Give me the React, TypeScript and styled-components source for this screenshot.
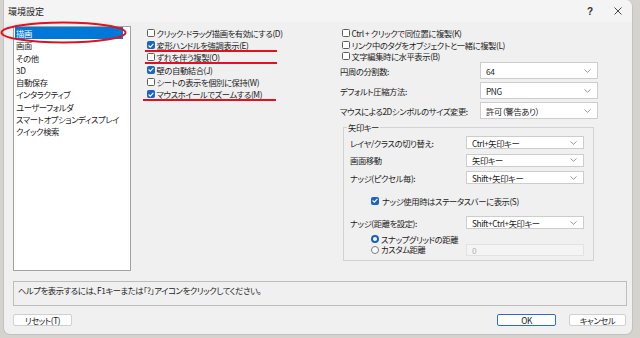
import React from 'react'
import styled, { createGlobalStyle, css } from 'styled-components'

const categories = [
	'描画',
	'画面',
	'その他',
	'3D',
	'自動保存',
	'インタラクティブ',
	'ユーザーフォルダ',
	'スマートオプションディスプレイ',
	'クイック検索',
]

const leftChecks = [
	{ label: 'クリック-ドラッグ描画を有効にする(D)', checked: false },
	{ label: '変形ハンドルを強調表示(E)', checked: true },
	{ label: 'ずれを伴う複製(O)', checked: false },
	{ label: '壁の自動結合(J)', checked: true },
	{ label: 'シートの表示を個別に保持(W)', checked: false },
	{ label: 'マウスホイールでズームする(M)', checked: true },
]

const rightChecks = [
	{ label: 'Ctrl + クリックで同位置に複製(K)', checked: false },
	{ label: 'リンク中のタグをオブジェクトと一緒に複製(L)', checked: false },
	{ label: '文字編集時に水平表示(B)', checked: false },
]

const fields = [
	{ label: '円周の分割数:', value: '64' },
	{ label: 'デフォルト圧縮方法:', value: 'PNG' },
	{ label: 'マウスによる2Dシンボルのサイズ変更:', value: '許可（警告あり）' },
]

const arrowFields = [
	{ label: 'レイヤ/クラスの切り替え:', value: 'Ctrl+矢印キー' },
	{ label: '画面移動', value: '矢印キー' },
	{ label: 'ナッジ(ピクセル毎):', value: 'Shift+矢印キー' },
]

const Chevron = () => (
	<svg width="7" height="4" viewBox="0 0 7 4">
		<path d="M0.5 0.5 L3.5 3.3 L6.5 0.5" fill="none" stroke="#8a8a8a" strokeWidth="0.9" />
	</svg>
)

const CheckMark = () => (
	<svg width="6" height="5" viewBox="0 0 6 5">
		<path d="M0.6 2.5 L2.3 4.1 L5.4 0.8" fill="none" stroke="#fff" strokeWidth="1.1" />
	</svg>
)

const Check = ({ label, checked }: { label: string; checked: boolean }) => (
	<CheckRow>
		<Box $checked={checked}>{checked && <CheckMark />}</Box>
		<span>{label}</span>
	</CheckRow>
)

const Dropdown = ({ value, $h }: { value: string; $h: number }) => (
	<Select $h={$h}>
		<span>{value}</span>
		<Chevron />
	</Select>
)

export default function App() {
	return (
		<Page>
			<GlobalStyle />
			<Window>
				<TitleBar>
					<Title>環境設定</Title>
					<TitleButton>?</TitleButton>
					<TitleButton>
						<svg width="8" height="8" viewBox="0 0 8 8">
							<path d="M0.5 0.5 L7.5 7.5 M7.5 0.5 L0.5 7.5" stroke="#333" strokeWidth="0.9" />
						</svg>
					</TitleButton>
				</TitleBar>

				<Body>
					<List>
						{categories.map((c, i) => (
							<ListItem key={c} $selected={i === 0}>
								{c}
							</ListItem>
						))}
					</List>

					<MiddleColumn>
						{leftChecks.map((c) => (
							<Check key={c.label} {...c} />
						))}
					</MiddleColumn>

					<RightColumn>
						<RightChecks>
							{rightChecks.map((c) => (
								<Check key={c.label} {...c} />
							))}
						</RightChecks>

						<FieldGrid>
							{fields.map((f) => (
								<React.Fragment key={f.label}>
									<Label>{f.label}</Label>
									<Dropdown value={f.value} $h={17} />
								</React.Fragment>
							))}
						</FieldGrid>

						<Group>
							<Legend>矢印キー</Legend>
							<GroupGrid>
								{arrowFields.map((f) => (
									<React.Fragment key={f.label}>
										<Label>{f.label}</Label>
										<Dropdown value={f.value} $h={13} />
									</React.Fragment>
								))}
							</GroupGrid>
							<NudgeCheck>
								<Check label="ナッジ使用時はステータスバーに表示(S)" checked />
							</NudgeCheck>
							<GroupGrid>
								<Label>ナッジ(距離を設定):</Label>
								<Dropdown value="Shift+Ctrl+矢印キー" $h={13} />
							</GroupGrid>
							<RadioGrid>
								<RadioRow>
									<Radio $on />
									<span>スナップグリッドの距離</span>
								</RadioRow>
								<span />
								<RadioRow>
									<Radio />
									<span>カスタム距離</span>
								</RadioRow>
								<TextField>0</TextField>
							</RadioGrid>
						</Group>
					</RightColumn>
				</Body>

				<HelpBox>ヘルプを表示するには、F1キーまたは「?」アイコンをクリックしてください。</HelpBox>

				<Footer>
					<Button $w={59}>リセット(T)</Button>
					<Spacer />
					<Button $w={59} $primary>
						OK
					</Button>
					<Button $w={57}>キャンセル</Button>
				</Footer>
			</Window>

			<Marks width="640" height="338" viewBox="0 0 640 338">
				<ellipse cx="63.5" cy="32.5" rx="62" ry="10" fill="none" stroke="#e3101e" strokeWidth="2" />
				<line x1="145" y1="51" x2="277" y2="51" stroke="#e3101e" strokeWidth="2" />
				<line x1="145" y1="63" x2="277" y2="63" stroke="#e3101e" strokeWidth="2" />
				<line x1="143" y1="100" x2="276" y2="100" stroke="#e3101e" strokeWidth="2" />
			</Marks>
		</Page>
	)
}

const GlobalStyle = createGlobalStyle`
	html, body {
		margin: 0;
		padding: 0;
	}

	body {
		background: #d6d3ce;
		font-family: "Noto Sans CJK JP", "Noto Sans", sans-serif;
		font-size: 8.3px;
		letter-spacing: -0.4px;
		font-feature-settings: "palt";
		color: #1c1c1c;
	}
`

const Page = styled.div`
	position: relative;
	width: 640px;
	height: 338px;
	overflow: hidden;
`

const Window = styled.div`
	box-sizing: border-box;
	width: 630px;
	height: 335px;
	margin-left: 3px;
	display: flex;
	flex-direction: column;

	background: #f0f0f0;
	border: 1px solid #c2c2c2;
	border-top: none;
	border-radius: 0 7px 7px 7px;
	overflow: hidden;
`

const TitleBar = styled.div`
	display: flex;
	align-items: center;
	height: 22px;
	flex: none;
	padding-left: 4px;
	background: #f4f4f4;
`

const Title = styled.div`
	flex: 1;
	font-size: 9px;
	letter-spacing: 0;
	color: #222;
`

const TitleButton = styled.div`
	width: 28px;
	display: flex;
	justify-content: center;
	font-family: "Liberation Sans", sans-serif;
	font-size: 10px;
	font-weight: bold;
	letter-spacing: 0;
	color: #333;
`

const Body = styled.div`
	display: flex;
	padding: 4px 0 0 9px;
`

const List = styled.div`
	box-sizing: border-box;
	width: 118px;
	height: 245px;
	flex: none;

	background: #fff;
	border: 1px solid #a2a2a2;
`

const ListItem = styled.div<{ $selected?: boolean }>`
	height: 12.3px;
	line-height: 12.3px;
	padding-left: 2px;
	margin-right: 7px;
	white-space: nowrap;

	${(p) =>
		p.$selected &&
		css`
			background: #0078d7;
			color: #fff;
			margin-left: 1px;
			padding-left: 1px;
		`}
`

const MiddleColumn = styled.div`
	width: 193px;
	margin-left: 16px;
	padding-top: 1px;
	flex: none;
`

const CheckRow = styled.div`
	display: flex;
	align-items: center;
	gap: 1.5px;
	height: 12.2px;
	white-space: nowrap;
`

const Box = styled.span<{ $checked?: boolean }>`
	box-sizing: border-box;
	flex: none;
	display: grid;
	place-items: center;
	width: 8px;
	height: 8px;

	border-radius: 1.5px;
	border: 1px solid ${(p) => (p.$checked ? '#1a64c8' : '#5c5c5c')};
	background: ${(p) => (p.$checked ? '#1a64c8' : '#fff')};
`

const RightColumn = styled.div`
	width: 258px;
	flex: none;
`

const RightChecks = styled.div`
	padding: 1px 0 0 2px;

	${CheckRow} {
		height: 11.7px;
	}
`

const FieldGrid = styled.div`
	display: grid;
	grid-template-columns: 140px 118px;
	grid-auto-rows: 17px;
	row-gap: 3px;
	align-items: center;
`

const Label = styled.span`
	white-space: nowrap;
`

const Select = styled.div<{ $h: number }>`
	box-sizing: border-box;
	display: flex;
	align-items: center;
	justify-content: space-between;
	height: ${(p) => p.$h}px;
	padding: 0 6px 0 5px;

	background: #fff;
	border: 1px solid #cdcdcd;
	white-space: nowrap;
`

const Group = styled.fieldset`
	box-sizing: border-box;
	width: 251px;
	height: 139px;
	margin: 3px 0 0 3px;
	padding: 2px 9px 0 6px;

	border: 1px solid #d2d2d2;
`

const Legend = styled.legend`
	padding: 0 1px;
	margin-left: -3px;
	line-height: 10px;
`

const GroupGrid = styled.div`
	display: grid;
	grid-template-columns: 116px 118px;
	grid-auto-rows: 17.5px;
	align-items: center;
`

const NudgeCheck = styled.div`
	display: flex;
	align-items: center;
	height: 27.5px;
	padding-left: 21px;
	padding-top: 1px;
	box-sizing: border-box;

	${CheckRow} {
		gap: 3px;
	}
`

const RadioGrid = styled.div`
	display: grid;
	grid-template-columns: 116px 118px;
	grid-template-rows: 9px 12px;
	align-items: center;
	margin-top: 3px;
`

const RadioRow = styled.div`
	display: flex;
	align-items: center;
	gap: 2px;
	height: 9px;
	line-height: 9px;
	padding-left: 21px;
	white-space: nowrap;
`

const Radio = styled.span<{ $on?: boolean }>`
	box-sizing: border-box;
	flex: none;
	width: 8px;
	height: 8px;
	border-radius: 50%;
	background: #fff;

	${(p) =>
		p.$on
			? css`
					border: 2.5px solid #1a5fbf;
				`
			: css`
					border: 1px solid #7a7a7a;
				`}
`

const TextField = styled.div`
	box-sizing: border-box;
	height: 12px;
	padding-left: 5px;
	line-height: 10px;

	background: #f4f4f4;
	border: 1px solid #e2e2e2;
	color: #b0b0b0;
`

const HelpBox = styled.div`
	box-sizing: border-box;
	width: 614px;
	height: 25px;
	margin: 10px 0 0 9px;
	padding: 2px 4px;

	border: 1px solid #bcbcbc;
	white-space: nowrap;
`

const Footer = styled.div`
	display: flex;
	align-items: center;
	gap: 13px;
	margin-top: 8px;
	padding: 0 6px 0 9px;
`

const Spacer = styled.div`
	flex: 1;
	margin-left: -13px;
`

const Button = styled.div<{ $w: number; $primary?: boolean }>`
	box-sizing: border-box;
	width: ${(p) => p.$w}px;
	height: 12px;
	display: flex;
	align-items: center;
	justify-content: center;

	background: #fdfdfd;
	border: 1px solid ${(p) => (p.$primary ? '#2a6fc4' : '#d0d0d0')};
	border-radius: 2px;
`

const Marks = styled.svg`
	position: absolute;
	left: 0;
	top: 0;
	pointer-events: none;
`
